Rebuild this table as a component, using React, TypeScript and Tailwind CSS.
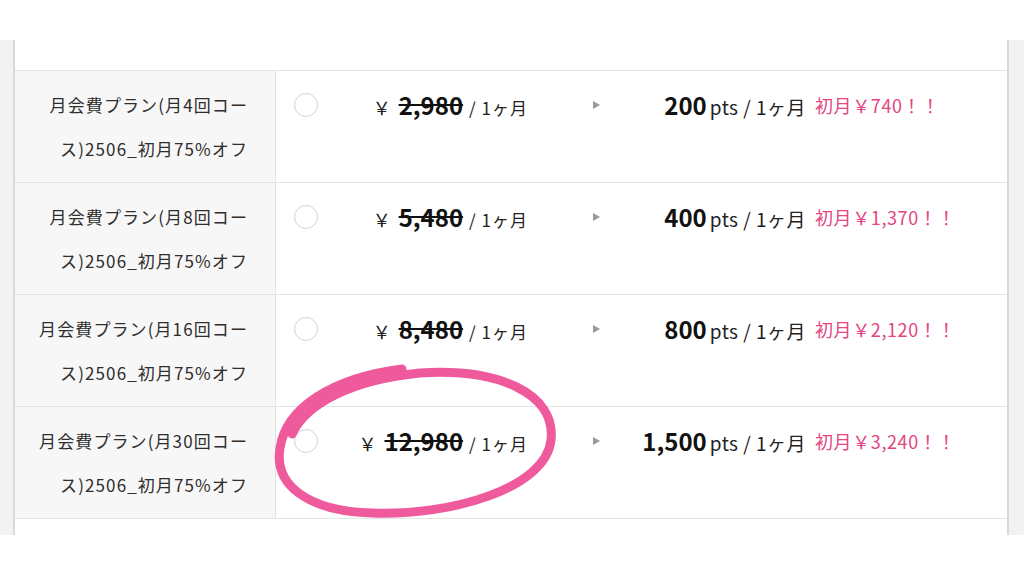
import React from 'react';

const plans = [
  { name: '月会費プラン(月4回コー', price: '2,980', pts: '200', promo: '初月￥740！！' },
  { name: '月会費プラン(月8回コー', price: '5,480', pts: '400', promo: '初月￥1,370！！' },
  { name: '月会費プラン(月16回コー', price: '8,480', pts: '800', promo: '初月￥2,120！！' },
  { name: '月会費プラン(月30回コー', price: '12,980', pts: '1,500', promo: '初月￥3,240！！' },
];

const font = { fontFamily: '"Noto Sans CJK JP", "Noto Sans", sans-serif' };

const PlanRow = ({ plan }: { plan: (typeof plans)[number] }) => (
  <div className="flex h-[112px] border-b border-[#e4e4e4]">
    {/* Label */}
    <div className="w-[261px] shrink-0 bg-[#f7f7f7] border-r border-[#e4e4e4] pr-[27px] pt-[12px] text-right text-[17px] leading-[44px] tracking-[1.1px] text-[#2e2e2e]">
      {plan.name}
      <br />
      ス)2506_初月75%オフ
    </div>

    {/* Plan line */}
    <div className="flex-1 pt-[12px]">
      <div className="flex h-[44px] items-center">
        <span className="ml-[18px] w-6 h-6 shrink-0 rounded-full border-[1.5px] border-[#cfd2db] bg-white" />
        <div className="w-[210px] shrink-0 text-right leading-none whitespace-nowrap">
          <span className="text-[18px] text-[#222]">￥</span>
          <span className="ml-[8px] text-[24px] font-bold line-through text-[#111]">{plan.price}</span>
          <span className="ml-[6px] text-[17px] tracking-[1px] text-[#222]">/ 1ヶ月</span>
        </div>
        <svg className="ml-[65px] shrink-0" width="7" height="8" viewBox="0 0 7 8">
          <path d="M0 0 L7 4 L0 8 Z" fill="#999" />
        </svg>
        <div className="w-[206px] shrink-0 text-right leading-none whitespace-nowrap">
          <span className="text-[24px] font-bold text-[#111]">{plan.pts}</span>
          <span className="ml-[3px] text-[19px] tracking-[0.5px] text-[#222]">pts / 1ヶ月</span>
        </div>
        <span className="ml-[9px] text-[18px] tracking-[0.6px] leading-none text-[#e4447f] whitespace-nowrap">{plan.promo}</span>
      </div>
    </div>
  </div>
);

export default function App() {
  return (
    <div className="relative w-[1024px] h-[576px] bg-white overflow-hidden" style={font}>
      <div className="mt-[40px] flex h-[495px]">
        <div className="w-[15px] bg-[#f2f2f2] border-r-2 border-[#d5d9e0]" />
        <div className="flex-1 bg-white">
          <div className="h-[31px] border-b border-[#e4e4e4]" />
          {plans.map((p) => (
            <PlanRow key={p.price} plan={p} />
          ))}
        </div>
        <div className="w-[17px] bg-[#f2f2f2] border-l-2 border-[#d5d9e0]" />
      </div>

      {/* hand-drawn highlight */}
      <svg className="absolute inset-0 pointer-events-none" width="1024" height="576" viewBox="0 0 1024 576">
        <path
          d="M292 434 C306 404 350 380 420 373 C500 368 556 394 551 440 C546 488 452 516 372 513 C306 511 274 484 280 448 C286 408 332 378 402 369"
          fill="none"
          stroke="#ef5a9d"
          strokeWidth="9"
          strokeLinecap="round"
        />
      </svg>
    </div>
  );
}
